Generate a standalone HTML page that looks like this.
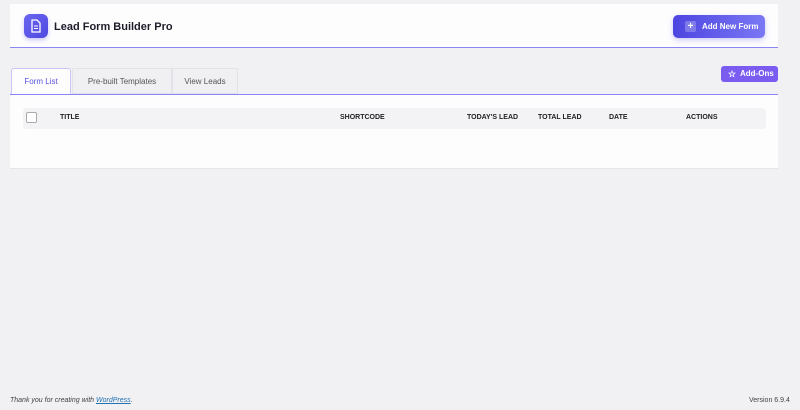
<!DOCTYPE html>
<html><head><style>
*{box-sizing:border-box;margin:0;padding:0}
body{width:800px;height:410px;background:#f1f0f2;font-family:"Liberation Sans",sans-serif;position:relative;overflow:hidden}
.hdr{position:absolute;left:10px;top:4px;width:768px;height:44px;background:#fdfdfe;border-bottom:1.5px solid #8a87f5}
.logo{position:absolute;left:14px;top:10px;width:24px;height:24px;border-radius:6px;background:linear-gradient(135deg,#6b66f0,#4f47e0);box-shadow:0 2px 4px rgba(80,70,220,.3)}
.title{position:absolute;left:44px;top:17px;font-size:11px;font-weight:bold;color:#1d1d2a}
.add{position:absolute;left:663px;top:11px;width:92px;height:23px;border-radius:5px;background:linear-gradient(90deg,#4d45e0,#7b78f5);color:#fff;font-size:8px;font-weight:bold;line-height:23px;padding-left:29px;white-space:nowrap;box-shadow:0 2px 6px rgba(90,80,230,.3)}
.add i{position:absolute;left:12px;top:6px;width:11px;height:11px;border-radius:2px;background:rgba(255,255,255,.25);color:#fff;font-style:normal;line-height:11px;text-align:center;font-size:10px}
.tab{position:absolute;top:68px;height:26px;font-size:8px;color:#555;line-height:26px;text-align:center;border:1px solid #e2e2e8;background:#f0f0f2}
.ao{position:absolute;left:721px;top:66px;width:57px;height:16px;border-radius:3px;background:#7a5cf0;color:#fff;font-size:8px;font-weight:bold;line-height:16px;padding-left:19px;white-space:nowrap}
.panel{position:absolute;left:10px;top:94px;width:768px;height:75px;background:#fdfdfe;border-top:1.5px solid #8a87f5;border-bottom:1px solid #e6e6ea}
.th{position:absolute;left:13px;top:13px;width:743px;height:21px;background:#f3f3f6;border-radius:4px}
.th span{position:absolute;top:6px;font-size:7px;font-weight:bold;color:#222}
.cb{position:absolute;left:3px;top:4px;width:11px;height:11px;border:1px solid #aaa;border-radius:2px;background:#fff}
.ft{position:absolute;top:397px;font-size:7px;color:#444}
</style></head><body>
<div class="hdr">
<div class="logo"><svg width="24" height="24" viewBox="0 0 24 24"><path d="M8 6h5l3 3v9H8z" fill="none" stroke="#fff" stroke-width="1.3"/><path d="M10 12h4M10 14.5h4" stroke="#fff" stroke-width="1"/></svg></div>
<div class="title">Lead Form Builder Pro</div>
<div class="add"><i>+</i>Add New Form</div>
</div>
<div class="tab" style="left:11px;width:60px;background:#fdfdfe;color:#5a55e0;border-color:#c8c6f5;border-bottom:none;border-radius:3px 3px 0 0">Form List</div>
<div class="tab" style="left:72px;width:100px">Pre-built Templates</div>
<div class="tab" style="left:172px;width:66px">View Leads</div>
<div class="ao"><span style="position:absolute;left:7px;top:0;font-size:9px">☆</span>Add-Ons</div>
<div class="panel"><div class="th"><div class="cb"></div>
<span style="left:37px">TITLE</span><span style="left:317px">SHORTCODE</span><span style="left:444px">TODAY'S LEAD</span><span style="left:515px">TOTAL LEAD</span><span style="left:586px">DATE</span><span style="left:663px">ACTIONS</span></div></div>
<div class="ft" style="left:10px;font-style:italic">Thank you for creating with <u style="color:#2271b1">WordPress</u>.</div>
<div class="ft" style="left:749px">Version 6.9.4</div>
</body></html>
